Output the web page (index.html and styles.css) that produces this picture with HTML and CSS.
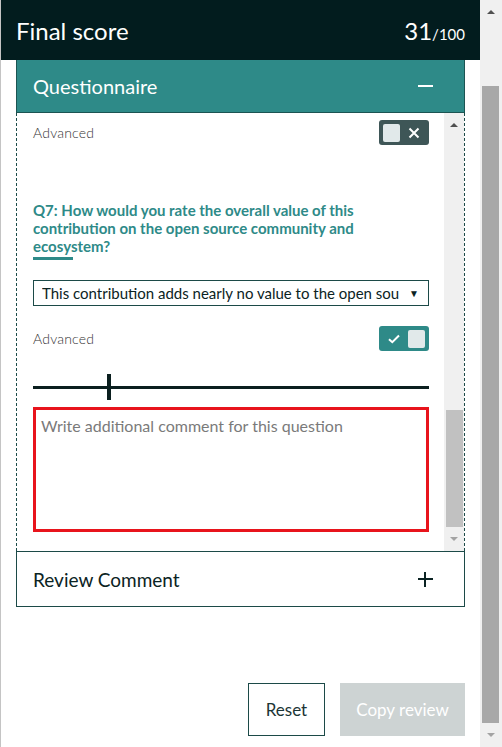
FILE: index.html
```html
<!DOCTYPE html>
<html lang="en">
<head>
    <meta charset="UTF-8">
    <meta name="viewport" content="width=device-width, initial-scale=1.0">
    <title>Final score</title>
    <link rel="stylesheet" href="styles.css">
</head>
<body>

    <div class="edge"></div>

    <div class="panel">
        <div class="header">
            <span class="header-title">Final score</span>
            <span class="score">31<small>/100</small></span>
        </div>

        <div class="section">
            <div class="section-head open">
                <span>Questionnaire</span>
                <span class="minus"></span>
            </div>

            <div class="section-body">
                <div class="questions">
                    <div class="adv-row">
                        <span class="adv-label">Advanced</span>
                        <div class="toggle off">
                            <span class="knob"></span>
                            <svg width="12" height="12" viewBox="0 0 12 12"><path d="M1.5 1.5 L10.5 10.5 M10.5 1.5 L1.5 10.5" stroke="#fff" stroke-width="2" fill="none"/></svg>
                        </div>
                    </div>

                    <p class="question">Q7: How would you rate the overall value of this contribution on the open source community and ecosystem?</p>
                    <div class="q-bar"></div>

                    <div class="select">
                        <span class="select-text">This contribution adds nearly no value to the open source community and ecosystem</span>
                        <span class="caret">&#9660;</span>
                    </div>

                    <div class="adv-row second">
                        <span class="adv-label">Advanced</span>
                        <div class="toggle on">
                            <svg width="12" height="10" viewBox="0 0 12 10"><path d="M1 5.2 L4.3 8.2 L11 1.5" stroke="#fff" stroke-width="2" fill="none"/></svg>
                            <span class="knob"></span>
                        </div>
                    </div>

                    <div class="slider">
                        <div class="slider-line"></div>
                        <div class="slider-thumb"></div>
                    </div>

                    <div class="comment">Write additional comment for this question</div>
                </div>

                <div class="mini-scroll">
                    <span class="arrow-up dark"></span>
                    <div class="mini-track">
                        <div class="mini-thumb"></div>
                    </div>
                    <span class="arrow-down"></span>
                </div>
            </div>
        </div>

        <div class="section-head closed">
            <span>Review Comment</span>
            <span class="plus"></span>
        </div>

        <div class="actions">
            <button class="btn-reset">Reset</button>
            <button class="btn-copy">Copy review</button>
        </div>
    </div>

    <div class="page-scroll">
        <span class="arrow-up dark"></span>
        <div class="page-track">
            <div class="page-thumb"></div>
        </div>
        <span class="arrow-down"></span>
    </div>

</body>
</html>
```

FILE: styles.css
```css
* {
    margin: 0;
    padding: 0;
    box-sizing: border-box;
}

body {
    font-family: Lato, "Open Sans", sans-serif;
    background-color: #fff;
    color: #0b2323;
    display: flex;
    height: 747px;
    overflow: hidden;
}

.edge {
    width: 1px;
    background-color: #c4c4c4;
}

.panel {
    width: 479px;
    display: flex;
    flex-direction: column;
}

/* header */
.header {
    height: 60px;
    background-color: #021c1e;
    color: #fff;
    display: flex;
    align-items: center;
    justify-content: space-between;
    padding: 0 15px 0 15px;
}

.header-title {
    font-size: 24px;
}

.score {
    font-size: 24px;
}

.score small {
    font-size: 15px;
}

/* sections */
.section {
    margin: 0 15px;
}

.section-head {
    display: flex;
    align-items: center;
    justify-content: space-between;
    padding: 0 31px 0 16px;
}

.section-head.open {
    height: 53px;
    background-color: #2e8a88;
    color: #fff;
    font-size: 20px;
    border: 1px solid #1c5452;
    border-top: none;
}

.minus {
    width: 15px;
    height: 2px;
    background-color: #fff;
}

.section-head.closed {
    height: 56px;
    margin: 0 15px;
    border: 1px solid #1c4a48;
    font-size: 19px;
    color: #0b2323;
}

.plus {
    position: relative;
    width: 15px;
    height: 15px;
}

.plus::before,
.plus::after {
    content: "";
    position: absolute;
    background-color: #0b2323;
}

.plus::before {
    left: 0;
    top: 6px;
    width: 15px;
    height: 2px;
}

.plus::after {
    left: 6px;
    top: 0;
    width: 2px;
    height: 15px;
}

.section-body {
    height: 438px;
    display: flex;
    border-left: 1px dashed #1c4a48;
    border-right: 1px dashed #1c4a48;
}

.questions {
    flex: 1;
    overflow: hidden;
    padding: 7px 15px 0 16px;
}

.adv-row {
    display: flex;
    align-items: center;
    justify-content: space-between;
    height: 25px;
}

.adv-row.second {
    margin-top: 20px;
}

.adv-label {
    font-size: 14px;
    font-weight: 300;
    color: #333;
    letter-spacing: 0.2px;
}

.toggle {
    width: 50px;
    height: 25px;
    border-radius: 3px;
    display: flex;
    align-items: center;
    justify-content: space-between;
    padding: 0 4px;
}

.toggle.off {
    background-color: #3e5657;
    padding-right: 9px;
}

.toggle.on {
    background-color: #2e8a88;
    padding-left: 9px;
}

.knob {
    width: 17px;
    height: 18px;
    border-radius: 2px;
    background-color: #e1e9ea;
}

.question {
    margin-top: 56px;
    font-size: 15px;
    line-height: 18px;
    font-weight: bold;
    color: #2e8a88;
    width: 345px;
}

.q-bar {
    width: 40px;
    height: 3px;
    margin-top: 2px;
    background-color: #2e8a88;
}

.select {
    margin-top: 20px;
    height: 26px;
    border: 1px solid #1c4a48;
    display: flex;
    align-items: center;
    padding: 0 9px 0 8px;
    gap: 10px;
    font-size: 15px;
    color: #0b2323;
}

.select-text {
    flex: 1;
    white-space: nowrap;
    overflow: hidden;
}

.caret {
    font-size: 10px;
}

.slider {
    position: relative;
    height: 26px;
    margin-top: 23px;
}

.slider-line {
    position: absolute;
    left: 0;
    right: 0;
    top: 12px;
    height: 3px;
    background-color: #0b1f1f;
}

.slider-thumb {
    position: absolute;
    left: 74px;
    top: 0;
    width: 4px;
    height: 26px;
    background-color: #0b1f1f;
}

.comment {
    margin-top: 7px;
    height: 125px;
    border: 3px solid #e8141c;
    padding: 6px 5px;
    font-size: 16px;
    color: #7a7a7a;
}

/* scrollbars */
.mini-scroll {
    width: 20px;
    background-color: #f0f0f0;
    display: flex;
    flex-direction: column;
    align-items: center;
}

.mini-track {
    flex: 1;
    width: 100%;
    display: flex;
    flex-direction: column;
    justify-content: flex-end;
    padding: 0 1px 0 2px;
}

.mini-thumb {
    height: 117px;
    background-color: #c1c1c1;
}

.arrow-up,
.arrow-down {
    width: 0;
    height: 0;
    border-left: 4px solid transparent;
    border-right: 4px solid transparent;
    margin: 10px 0;
}

.arrow-up {
    border-bottom: 4px solid #a3a3a3;
}

.arrow-up.dark {
    border-bottom-color: #505050;
}

.arrow-down {
    border-top: 4px solid #a3a3a3;
}

.page-scroll {
    width: 22px;
    background-color: #f0f0f0;
    display: flex;
    flex-direction: column;
    align-items: center;
}

.page-track {
    flex: 1;
    width: 100%;
    padding: 62px 3px 0 2px;
    display: flex;
}

.page-thumb {
    flex: 1;
    background-color: #a8a8a8;
}

/* buttons */
.actions {
    display: flex;
    justify-content: flex-end;
    gap: 15px;
    margin-top: 76px;
    padding-right: 15px;
}

.actions button {
    height: 53px;
    font-family: Lato, "Open Sans", sans-serif;
    font-size: 17px;
}

.btn-reset {
    width: 77px;
    background-color: #fff;
    border: 1px solid #1c4a48;
    color: #1c3535;
}

.btn-copy {
    width: 125px;
    background-color: #cdd3d3;
    border: none;
    color: #fff;
}
```
